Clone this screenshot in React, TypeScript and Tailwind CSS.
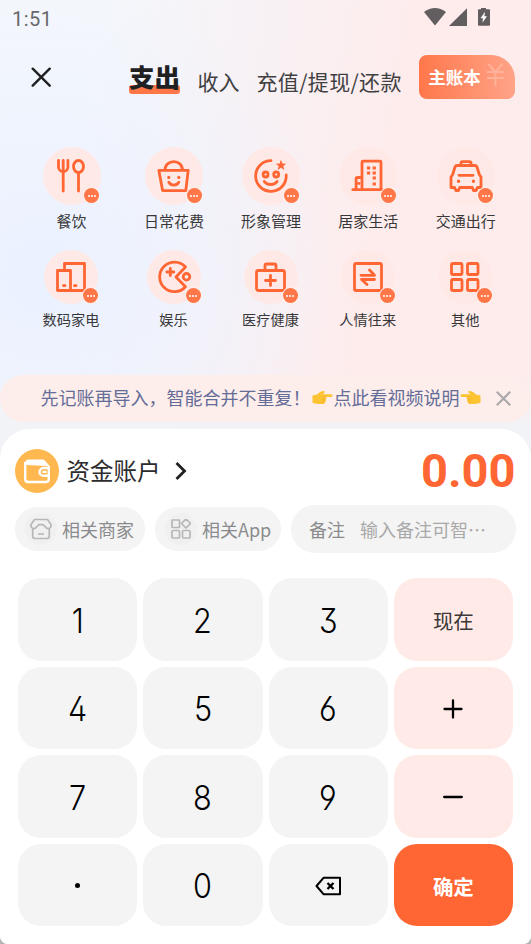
import React from "react";

const ORANGE = "#ff6633";

type Draw = { label: string; icon: React.ReactNode };

const topRow: Draw[] = [
  {
    label: "餐饮",
    icon: (
      <>
        <path d="M6.5 4.5v6.5a4.700 4.700 0 0 0 9.400 0V4.500M11.200 4.500V35" />
        <ellipse cx="26.500" cy="10.500" rx="5" ry="6" />
        <path d="M26.500 16.500v18.500" />
      </>
    ),
  },
  {
    label: "日常花费",
    icon: (
      <>
        <path d="M4.800 14.300h29.400L31.800 34.600H8.600ZM11 14c0-5.200 4-8.300 8.800-8.300s8.600 3.100 8.600 8.300M14.800 26.200c2.200 3.800 7.800 3.800 10 0" />
        <path d="M14.800 21.300v.2M24.800 21.300v.2" strokeWidth="3.200" />
      </>
    ),
  },
  {
    label: "形象管理",
    icon: (
      <>
        <path d="M20 4.700A15.300 15.300 0 1 0 35.200 19" />
        <circle cx="14.600" cy="18.500" r="2.500" />
        <circle cx="25.200" cy="18.500" r="2.500" />
        <path d="M13.300 25.500c2.600 4 10.200 4 12.800 0" />
        <path d="m30 5 1.200 3h3.200l-2.600 2 1 3.200-2.800-1.900-2.800 1.900 1-3.200-2.600-2h3.200Z" fill={ORANGE} strokeWidth=".8" />
      </>
    ),
  },
  {
    label: "居家生活",
    icon: (
      <>
        <path d="M4.800 33.700h29.400M14 33V6.200q0-1 1-1h17q1 0 1 1V33M13.500 21.500h-4q-1.400 0-1.400 1.400V33M10.800 27.500h.2" />
        <path d="M20.500 12h.1M26.200 12h.1M20.500 17h.1M26.200 17h.1M26.200 22h.1M26.200 28h.1" strokeWidth="3.200" strokeLinecap="square" />
      </>
    ),
  },
  {
    label: "交通出行",
    icon: (
      <>
        <path d="M15 9V7q0-1.300 1.300-1.300h7.400Q25 5.700 25 7v2M11 9.500h18q1.400 0 2 1.500l2.300 7.500 1.700 2.500v10.500h-3.500l-1.500 3h-2.500l-1.200-3H13.700l-1.200 3H10l-1.500-3H5V21l1.700-2.500L9 11q.6-1.500 2-1.500ZM13 19.300h14" />
        <path d="M12.500 25.300h.1M27.400 25.300h.1" strokeWidth="3.400" />
      </>
    ),
  },
];

const bottomRow: Draw[] = [
  {
    label: "数码家电",
    icon: (
      <>
        <path d="M6.500 13.500h13V33.500h-13ZM13.500 13V6.500h20v27H19.500" />
        <path d="M12.500 28.700h1.500M23.500 28.700h1.500" />
      </>
    ),
  },
  {
    label: "娱乐",
    icon: (
      <>
        <path d="M31.500 10A14.800 14.800 0 1 0 31.500 29.800L22 20Z" />
        <circle cx="32.500" cy="19.800" r="3.300" />
        <path d="M16.300 11.500v7M12.800 15h7" />
      </>
    ),
  },
  {
    label: "医疗健康",
    icon: (
      <>
        <rect x="5.500" y="13.500" width="28" height="20" rx="2" />
        <path d="M14 13V8.500Q14 7 15.500 7h8q1.500 0 1.500 1.500V13M19.500 18.500v10M14.500 23.500h10" />
      </>
    ),
  },
  {
    label: "人情往来",
    icon: (
      <>
        <rect x="6.500" y="6.500" width="27" height="27" rx="1.500" />
        <path d="M13 18.300h13.500L21.500 13M26.500 22.500H13.500l5.500 5" />
      </>
    ),
  },
  {
    label: "其他",
    icon: (
      <>
        <rect x="6.500" y="6.500" width="10.500" height="11" rx="1.500" />
        <rect x="22.500" y="6.500" width="10.500" height="11" rx="1.500" />
        <rect x="6.500" y="22.500" width="10.500" height="11" rx="1.500" />
        <rect x="22.500" y="22.500" width="10.500" height="11" rx="1.500" />
      </>
    ),
  },
];

function Category({ item, small }: { item: Draw; small?: boolean }) {
  return (
    <div className="flex flex-col items-center">
      <div
        className={
          small
            ? "relative flex h-[54px] w-[54px] items-center justify-center rounded-full bg-[#ffe9e7]"
            : "relative flex h-[58px] w-[58px] items-center justify-center rounded-full bg-[#ffe9e7]"
        }
      >
        <svg
          className="h-10 w-10 shrink-0"
          viewBox="0 0 40 40"
          fill="none"
          stroke={ORANGE}
          strokeWidth="2.800"
          strokeLinecap="round"
          strokeLinejoin="round"
        >
          {item.icon}
        </svg>
        <span
          className={
            small
              ? "absolute right-0 bottom-[1px] flex h-[15px] w-[15px] items-center justify-center gap-px rounded-full bg-[#ff7748] ring-1 ring-[#fff0ed]"
              : "absolute right-[1.500px] bottom-[1.500px] flex h-[15px] w-[15px] items-center justify-center gap-px rounded-full bg-[#ff7748] ring-1 ring-[#fff0ed]"
          }
        >
          <i className="h-[2px] w-[2px] rounded-full bg-white" />
          <i className="h-[2px] w-[2px] rounded-full bg-white" />
          <i className="h-[2px] w-[2px] rounded-full bg-white" />
        </span>
      </div>
      <span
        className={
          small
            ? "mt-[4.500px] text-[14.200px] leading-5 whitespace-nowrap text-[#38383a]"
            : "mt-[6.500px] text-[15px] leading-5 whitespace-nowrap text-[#38383a]"
        }
      >
        {item.label}
      </span>
    </div>
  );
}

function Hand({ flip }: { flip?: boolean }) {
  return (
    <svg className={flip ? "h-[18px] w-[21px] -scale-x-100" : "ml-px h-[18px] w-[21px]"} viewBox="0 0 21 18">
      <path
        d="M.5 7.500 5 6.500C7 4.500 10 2.500 12 3c1.200.4 1 1.700-.3 2.300L10.500 6.300H19c2 0 2 2.800 0 2.800h-5.500c1.500.4 1.300 2.400-.2 2.600 1.200.6.8 2.200-.5 2.400.6 1-.2 1.900-1.500 1.900H6c-2 0-3-.8-5.500-1Z"
        fill="#fcc433"
      />
      <path d="M10 9.100h4M10 11.700h3.300M9.500 14.100h3" stroke="#eda52a" strokeWidth=".6" />
    </svg>
  );
}

function Key({ children }: { children: React.ReactNode }) {
  return (
    <button className="flex items-center justify-center rounded-[23px] bg-[#f4f4f4] pt-[2px] font-['Inter',sans-serif] text-[34px] font-light text-black">
      {children}
    </button>
  );
}

function Digit({ value }: { value: string }) {
  return (
    <Key>
      <span className="scale-x-90 [font-feature-settings:'cv03','cv04','cv09','ss01']">{value}</span>
    </Key>
  );
}

function PinkKey({ children }: { children: React.ReactNode }) {
  return (
    <button className="flex items-center justify-center rounded-[23px] bg-[#ffeae8] pt-[2px] text-[20.500px] text-[#3c3838]">
      {children}
    </button>
  );
}

export default function App() {
  return (
    <div className="flex h-[944px] w-[531px] flex-col overflow-hidden bg-[#b5b5b5] font-['Noto_Sans_CJK_SC',sans-serif]">
      <div className="flex h-full flex-col overflow-hidden rounded-b-[8px] bg-[linear-gradient(to_bottom,transparent_370px,#f2f3f6_427px),radial-gradient(ellipse_300px_300px_at_40px_275px,#eaf1ff_0%,#edf2fed0_35%,transparent_100%),linear-gradient(100deg,#f4f7fc_15%,#f8f1f4_40%,#feecec_60%,#feebea_100%)]">
        <div className="flex h-9 items-center justify-between pr-[41px] pl-[12px]">
          <span className="pt-px font-['Roboto',sans-serif] text-[20px] tracking-[0.500px] text-[#68686b]">1:51</span>
          <div className="flex h-5 items-center text-[#625d5f]">
            <svg className="h-5 w-[66px]" viewBox="0 0 66 20" fill="currentColor">
              <path d="M0 4Q11-4 22 4L11 17.500Z" />
              <path d="M43 .3V18H25Z" />
              <path d="M57 0h5v1.300H65q1 0 1 1v14.500q0 1-1 1H55q-1 0-1-1V2.300q0-1 1-1h2Z" />
              <path d="m61 3.800-4.500 6.500H59l-.6 4.500 4.600-6.500h-2.600Z" fill="#fff" />
            </svg>
          </div>
        </div>

        <header className="flex h-[82px] items-start pl-[31px]">
          <svg className="mt-[31px] h-5 w-5 shrink-0" viewBox="0 0 20 20" stroke="#202022" strokeWidth="2.400" strokeLinecap="round">
            <path d="m1.700 1.700 17 17M18.700 1.700l-17 17" />
          </svg>
          <div className="relative isolate mt-[24px] ml-[78px] flex h-[34px] w-[51px] items-start justify-center text-[25.500px] leading-8 font-black whitespace-nowrap text-[#202022]">
            <span className="absolute bottom-0 left-0 -z-10 h-[9.500px] w-full rounded-[3px] bg-[#ff7749]" />
            支出
          </div>
          <span className="mt-[29px] ml-[17.500px] text-[21px] leading-8 whitespace-nowrap text-[#404042]">收入</span>
          <span className="mt-[29px] ml-[17px] text-[21px] leading-8 tracking-[0.350px] whitespace-nowrap text-[#404042]">
            充值/提现/还款
          </span>
          <button className="mt-[18.500px] ml-[17.500px] flex h-[44.500px] w-[96px] shrink-0 items-center rounded-[8px] rounded-tr-[24px] bg-linear-to-r from-[#ff774a] to-[#ffa387] pl-[9px] text-[17.500px] font-bold whitespace-nowrap text-white">
            <span className="pt-px">主账本</span>
            <svg className="mb-[3px] ml-[5px] h-6 w-[19px]" viewBox="0 0 19 24" fill="none" stroke="#ffb39b" strokeWidth="1.900">
              <path d="m2.500 1 7 8 7-8M1 9h17M1 15h17M9.500 9v14" />
            </svg>
          </button>
        </header>

        <section className="mt-[28.500px] grid h-[101.500px] grid-cols-[108px_97px_97px_97.500px_97.500px] pl-[17.500px]">
          {topRow.map((item) => (
            <Category key={item.label} item={item} />
          ))}
        </section>
        <section className="mt-[2px] grid h-[124.500px] grid-cols-[108px_97px_97px_97.500px_97.500px] pl-[17px]">
          {bottomRow.map((item) => (
            <Category key={item.label} item={item} small />
          ))}
        </section>

        <div className="flex h-[47.500px] shrink-0 items-center rounded-full bg-[#feeeeb] pb-[2px] pl-[40.500px] text-[18px] whitespace-nowrap text-[#646d98]">
          <span>先记账再导入，智能合并不重复！</span>
          <Hand />
          <span className="ml-px">点此看视频说明</span>
          <Hand flip />
          <svg className="mt-[2px] ml-[15.500px] h-[15px] w-[15px]" viewBox="0 0 15 15" stroke="#aaa8aa" strokeWidth="2.100">
            <path d="m.8.8 13.400 13.400M14.200.8.8 14.200" />
          </svg>
        </div>

        <main className="mt-[7px] flex flex-1 flex-col rounded-t-[30px] bg-white">
          <div className="mt-[19px] flex h-[45px] items-center pr-[15.500px] pl-[15px]">
            <div className="flex h-11 w-11 items-center justify-center rounded-full bg-[#ffb74f]">
              <svg className="h-7 w-7" viewBox="0 0 28 28" fill="none" stroke="#fff" strokeWidth="2.400" strokeLinejoin="round">
                <path d="M2.200 5v17q0 3 3 3h17.600q3 0 3-3V9" />
                <path d="M2.200 7.500q0-4.500 3-4.500h15.600l5 5.500Z" fill="#fff" strokeWidth="1" />
                <path d="M25.500 11h-5a3.900 3.900 0 0 0 0 7.800h5" />
                <path d="M20.500 14.900h2" strokeLinecap="round" />
              </svg>
            </div>
            <span className="ml-[7.500px] text-[23.500px] whitespace-nowrap text-[#2c2c2e]">资金账户</span>
            <svg className="ml-[14px] h-5 w-3" viewBox="0 0 12 20" fill="none" stroke="#202022" strokeWidth="2.800">
              <path d="m1.500 2 8 8-8 8" />
            </svg>
            <span className="ml-auto font-['Roboto',sans-serif] text-[47px] leading-none font-bold text-[#ff6633]">0.00</span>
          </div>

          <div className="mt-[12px] flex h-[48px] items-center pl-[15px] text-[18px] whitespace-nowrap text-[#8b8b8d]">
            <div className="flex h-[44.500px] w-[129.500px] items-center rounded-full bg-[#f4f4f4] pl-[10px]">
              <span className="flex h-8 w-8 items-center justify-center rounded-full bg-[#f0f0f0]">
                <svg className="h-[22px] w-[22px]" viewBox="0 0 22 22" fill="none" stroke="#b7b7b7" strokeWidth="1.700" strokeLinejoin="round">
                  <path d="M4.500 1.500h13l3.500 5v2.200c-1.500 2.600-4.500 2.600-5.800 0L13 6.700h-4L6.800 8.700c-1.300 2.600-4.300 2.600-5.800 0V6.500ZM2.700 10.500V18q0 2.500 2.500 2.500h11.600q2.500 0 2.500-2.500v-7.500M8 16h6" />
                </svg>
              </span>
              <span className="ml-[5px]">相关商家</span>
            </div>
            <div className="ml-[10.500px] flex h-[44.500px] w-[126px] items-center rounded-full bg-[#f4f4f4] pl-[10px]">
              <span className="flex h-8 w-8 items-center justify-center rounded-full bg-[#f0f0f0]">
                <svg className="h-5 w-5" viewBox="0 0 20 20" fill="none" stroke="#b7b7b7" strokeWidth="1.700" strokeLinejoin="round">
                  <rect x="1" y="1" width="7.500" height="7.500" rx=".5" />
                  <path d="m15 0 4.500 4.500L15 9l-4.500-4.500Z" />
                  <rect x="1" y="11.500" width="7.500" height="7.500" rx="1" />
                  <rect x="11.500" y="11.500" width="7.500" height="7.500" rx="1" />
                </svg>
              </span>
              <span className="ml-[5px]">相关App</span>
            </div>
            <div className="ml-[10px] flex h-[47.500px] w-[225px] items-center rounded-full bg-[#f4f4f4] pl-[18px]">
              <span>备注</span>
              <span className="ml-[15px] text-[#a9a9a9]">输入备注可智⋯</span>
            </div>
          </div>

          <div className="mt-[25px] grid h-[348px] grid-cols-4 grid-rows-4 gap-[6px] pr-[18px] pl-[18px]">
            <Digit value="1" />
            <Digit value="2" />
            <Digit value="3" />
            <PinkKey>现在</PinkKey>
            <Digit value="4" />
            <Digit value="5" />
            <Digit value="6" />
            <PinkKey>
              <svg className="h-5 w-5" viewBox="0 0 20 20" stroke="#000" strokeWidth="2.300" strokeLinecap="round">
                <path d="M1.500 10h17M10 1.500v17" />
              </svg>
            </PinkKey>
            <Digit value="7" />
            <Digit value="8" />
            <Digit value="9" />
            <PinkKey>
              <svg className="h-5 w-5" viewBox="0 0 20 20" stroke="#000" strokeWidth="2.300" strokeLinecap="round">
                <path d="M1.200 10h17.600" />
              </svg>
            </PinkKey>
            <Key>
              <span className="h-[5px] w-[5px] rounded-full bg-black" />
            </Key>
            <Digit value="0" />
            <Key>
              <svg className="h-5 w-[27px]" viewBox="0 0 27 20" fill="none" stroke="#000" strokeWidth="2" strokeLinejoin="round">
                <path d="M8.500 1.800h16.500v16.400H8.500L1.500 10Z" />
                <path d="m12.500 7 6 6M18.500 7l-6 6" strokeWidth="2.400" />
              </svg>
            </Key>
            <button className="flex items-center justify-center rounded-[23px] bg-[#ff6633] pt-1 text-[20.500px] font-bold text-white">
              确定
            </button>
          </div>
        </main>
      </div>
    </div>
  );
}
